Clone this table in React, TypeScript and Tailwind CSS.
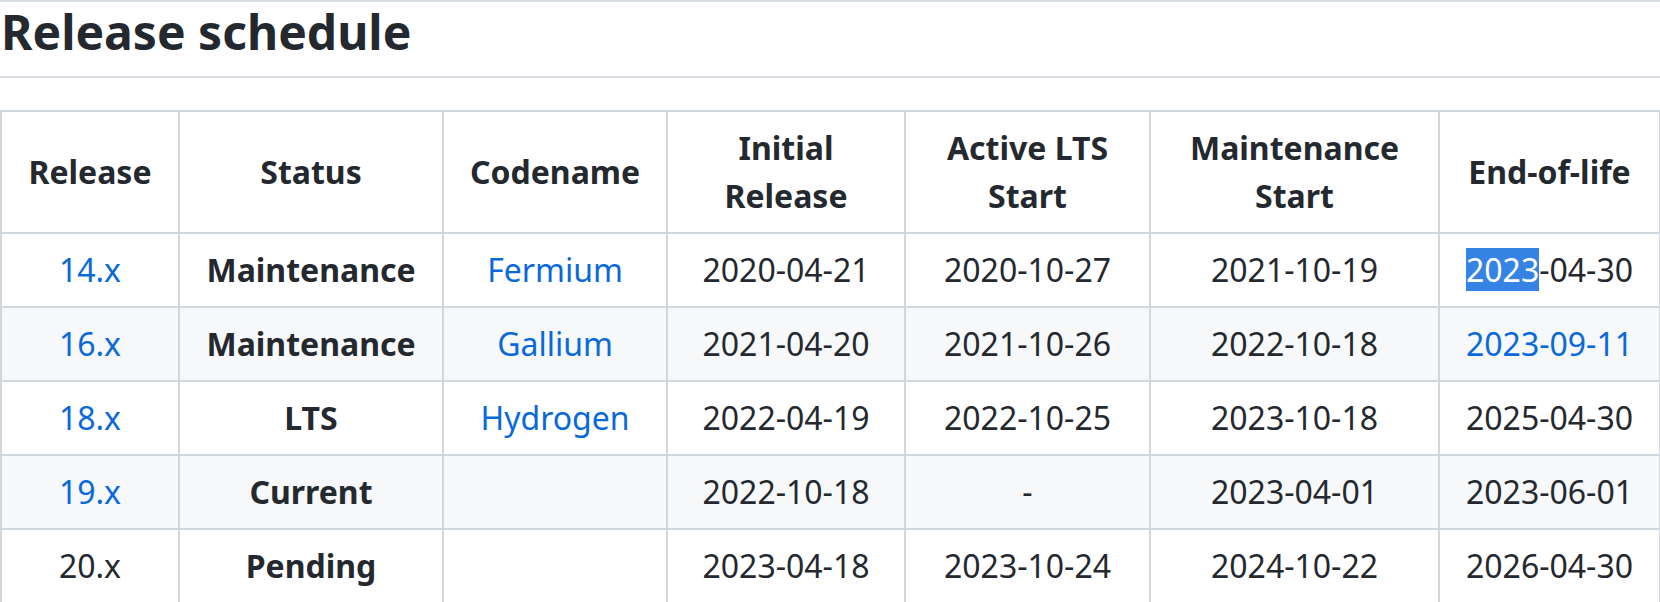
const rows = [
  { release: "14.x", link: true, status: "Maintenance", codename: "Fermium", initial: "2020-04-21", lts: "2020-10-27", maint: "2021-10-19", eol: "2023-04-30", eolLink: false, selected: true },
  { release: "16.x", link: true, status: "Maintenance", codename: "Gallium", initial: "2021-04-20", lts: "2021-10-26", maint: "2022-10-18", eol: "2023-09-11", eolLink: true },
  { release: "18.x", link: true, status: "LTS", codename: "Hydrogen", initial: "2022-04-19", lts: "2022-10-25", maint: "2023-10-18", eol: "2025-04-30" },
  { release: "19.x", link: true, status: "Current", codename: "", initial: "2022-10-18", lts: "-", maint: "2023-04-01", eol: "2023-06-01" },
  { release: "20.x", link: false, status: "Pending", codename: "", initial: "2023-04-18", lts: "2023-10-24", maint: "2024-10-22", eol: "2026-04-30" },
];

const th = "border-2 border-[#d0d7de] px-[26px] py-3 text-center font-bold leading-[48px]";
const td = "border-2 border-[#d0d7de] px-[20px] py-3 text-center leading-[48px] whitespace-nowrap";

export default function App() {
  return (
    <div
      className="w-[1660px] h-[602px] overflow-hidden bg-white text-[#24292f]"
      style={{ fontFamily: '"Noto Sans", "Open Sans", sans-serif' }}
    >
      <div className="h-[2px] bg-[#d8dee4]" />
      <h2 className="text-[48px] leading-[60px] font-bold pb-[14px] border-b-2 border-[#d8dee4] mb-8 pl-[1px]">
        Release schedule
      </h2>

      <table className="w-[1659px] table-fixed border-collapse text-[32px]">
        <colgroup>
          <col className="w-[178px]" />
          <col className="w-[264px]" />
          <col className="w-[224px]" />
          <col className="w-[238px]" />
          <col className="w-[245px]" />
          <col className="w-[289px]" />
          <col className="w-[221px]" />
        </colgroup>
        <thead>
          <tr>
            <th className={th}>Release</th>
            <th className={th}>Status</th>
            <th className={th}>Codename</th>
            <th className={th}>Initial Release</th>
            <th className={th}>Active LTS Start</th>
            <th className={th}>Maintenance Start</th>
            <th className={th}>End-of-life</th>
          </tr>
        </thead>
        <tbody>
          {rows.map((r, i) => (
            <tr key={r.release} className={i % 2 === 1 ? "bg-[#f6f8fa]" : "bg-white"}>
              <td className={td}>
                <span className={r.link ? "text-[#0969da]" : ""}>{r.release}</span>
              </td>
              <td className={td + " font-bold"}>{r.status}</td>
              <td className={td}>
                <span className="text-[#0969da]">{r.codename}</span>
              </td>
              <td className={td}>{r.initial}</td>
              <td className={td}>{r.lts}</td>
              <td className={td}>{r.maint}</td>
              <td className={td}>
                {r.selected ? (
                  <>
                    <span className="bg-[#3584e4] text-white">2023</span>-04-30
                  </>
                ) : (
                  <span className={r.eolLink ? "text-[#0969da]" : ""}>{r.eol}</span>
                )}
              </td>
            </tr>
          ))}
        </tbody>
      </table>
    </div>
  );
}
